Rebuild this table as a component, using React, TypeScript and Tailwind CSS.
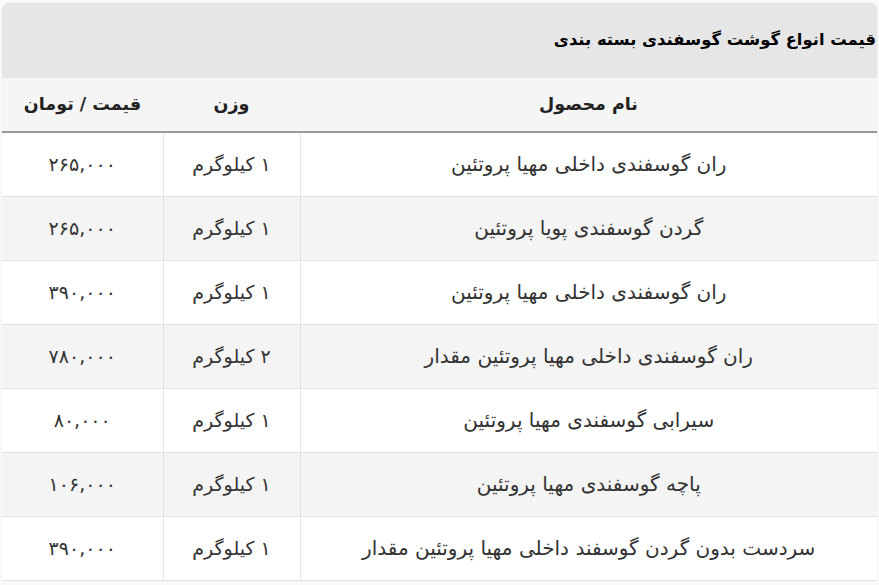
import React from 'react'

const rows = [
  { name: 'ران گوسفندی داخلی مهیا پروتئین', weight: '۱ کیلوگرم', price: '۲۶۵,۰۰۰' },
  { name: 'گردن گوسفندی پویا پروتئین', weight: '۱ کیلوگرم', price: '۲۶۵,۰۰۰' },
  { name: 'ران گوسفندی داخلی مهیا پروتئین', weight: '۱ کیلوگرم', price: '۳۹۰,۰۰۰' },
  { name: 'ران گوسفندی داخلی مهیا پروتئین مقدار', weight: '۲ کیلوگرم', price: '۷۸۰,۰۰۰' },
  { name: 'سیرابی گوسفندی مهیا پروتئین', weight: '۱ کیلوگرم', price: '۸۰,۰۰۰' },
  { name: 'پاچه گوسفندی مهیا پروتئین', weight: '۱ کیلوگرم', price: '۱۰۶,۰۰۰' },
  { name: 'سردست بدون گردن گوسفند داخلی مهیا پروتئین مقدار', weight: '۱ کیلوگرم', price: '۳۹۰,۰۰۰' },
]

export default function App() {
  return (
    <div
      dir="rtl"
      className="min-h-[585px] bg-[#fafafa] pt-[3px] pl-[2px] pr-[2px]"
      style={{ fontFamily: '"DejaVu Sans", sans-serif' }}
    >
      <div className="overflow-hidden rounded-t-[7px] bg-white shadow-[0_0_2px_rgba(0,0,0,0.08)]">
        {/* caption */}
        <div className="flex h-[75px] items-center bg-[#e6e6e6] pr-[1px] text-[16.4px] font-bold text-black">
          قیمت انواع گوشت گوسفندی بسته بندی
        </div>

        <table className="w-full table-fixed border-collapse text-[19px] text-[#333]">
          <colgroup>
            <col className="w-[577px]" />
            <col className="w-[137px]" />
            <col />
          </colgroup>
          <thead>
            <tr className="h-[54px] border-b-2 border-[#999] bg-[#f5f5f5] text-[17.5px] text-[#222]">
              <th className="font-bold">نام محصول</th>
              <th className="font-bold">وزن</th>
              <th className="font-bold">قیمت / تومان</th>
            </tr>
          </thead>
          <tbody>
            {rows.map((r, i) => (
              <tr
                key={i}
                className={`h-[64px] border-b border-[#e2e2e2] ${i % 2 === 1 ? 'bg-[#f4f4f4]' : 'bg-white'}`}
              >
                <td className="border-l border-[#e2e2e2] text-center text-[20px]">{r.name}</td>
                <td className="border-l border-[#e2e2e2] text-center">{r.weight}</td>
                <td className="text-center">{r.price}</td>
              </tr>
            ))}
          </tbody>
        </table>
      </div>
    </div>
  )
}
